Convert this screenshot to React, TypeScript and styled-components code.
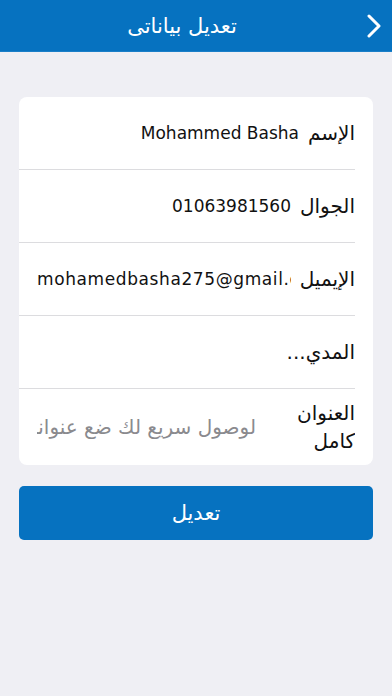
import React from "react";
import styled, { createGlobalStyle } from "styled-components";

const Global = createGlobalStyle`
  html, body { margin: 0; padding: 0; background: #efeff4; }
  body { font-family: "DejaVu Sans", "Liberation Sans", sans-serif; }
  * { box-sizing: border-box; }
`;

const Page = styled.div`
  width: 392px;
  min-height: 696px;
  background: #efeff4;
  direction: rtl;
`;

const Header = styled.header`
  height: 52px;
  background: #0672c0;
  display: flex;
  align-items: center;
  justify-content: center;
  position: relative;
  padding-right: 28px;
  border-bottom: 1px solid #1a7fc8;
`;

const Title = styled.h1`
  margin: 0;
  font-size: 21px;
  font-weight: normal;
  color: #ffffff;
`;

const Back = styled.button`
  position: absolute;
  right: 8px;
  top: 12px;
  width: 20px;
  height: 28px;
  padding: 0;
  border: none;
  background: transparent;
  display: flex;
  align-items: center;
  justify-content: center;
`;

const Content = styled.main`
  padding: 45px 19px 0;
  display: flex;
  flex-direction: column;
  gap: 21px;
`;

const Card = styled.section`
  background: #ffffff;
  border-radius: 8px;
  overflow: hidden;
`;

const Row = styled.div<{ $last?: boolean }>`
  height: ${(p) => (p.$last ? "76px" : "73px")};
  margin-right: 18px;
  display: flex;
  align-items: center;
  gap: 9px;
  border-bottom: ${(p) => (p.$last ? "none" : "1.5px solid #dcdcdf")};
  overflow: hidden;
  white-space: nowrap;
`;

const Label = styled.span<{ $wrap?: boolean }>`
  font-size: 20px;
  color: #111;
  flex: none;
  white-space: ${(p) => (p.$wrap ? "normal" : "nowrap")};
  width: ${(p) => (p.$wrap ? "64px" : "auto")};
  line-height: 28px;
  text-align: right;
`;

const Value = styled.span<{ $fill?: boolean }>`
  font-family: "DejaVu Sans", sans-serif;
  font-size: 17px;
  color: #111;
  direction: ltr;
  overflow: hidden;
  white-space: nowrap;
  flex: ${(p) => (p.$fill ? "1" : "none")};
  margin-left: 18px;
  text-align: left;
  letter-spacing: ${(p) => (p.$fill ? "0.6px" : "0")};
`;

const Placeholder = styled.span`
  font-family: "DejaVu Sans", sans-serif;
  font-size: 20px;
  color: #8a8a8e;
  overflow: hidden;
  white-space: nowrap;
  flex: 1;
  margin-right: 26px;
  margin-left: 18px;
  text-align: right;
`;

const SubmitButton = styled.button`
  height: 54px;
  border: none;
  border-radius: 5px;
  background: #0672c0;
  color: #ffffff;
  font-family: "DejaVu Sans", sans-serif;
  font-size: 21px;
  display: flex;
  align-items: center;
  justify-content: center;
`;

export default function App() {
  return (
    <Page>
      <Global />
      <Header>
        <Back aria-label="back">
          <svg width="14" height="24" viewBox="0 0 14 24" fill="none">
            <path d="M2 2 L12 12 L2 22" stroke="#fff" strokeWidth="3" strokeLinecap="round" strokeLinejoin="round" />
          </svg>
        </Back>
        <Title>تعديل بياناتى</Title>
      </Header>
      <Content>
        <Card>
          <Row>
            <Label>الإسم</Label>
            <Value>Mohammed Basha</Value>
          </Row>
          <Row>
            <Label>الجوال</Label>
            <Value>01063981560</Value>
          </Row>
          <Row>
            <Label>الإيميل</Label>
            <Value $fill>mohamedbasha275@gmail.com</Value>
          </Row>
          <Row>
            <Label>المدي...</Label>
          </Row>
          <Row $last>
            <Label $wrap>العنوان كامل</Label>
            <Placeholder>لوصول سريع لك ضع عنوانك</Placeholder>
          </Row>
        </Card>
        <SubmitButton>تعديل</SubmitButton>
      </Content>
    </Page>
  );
}
